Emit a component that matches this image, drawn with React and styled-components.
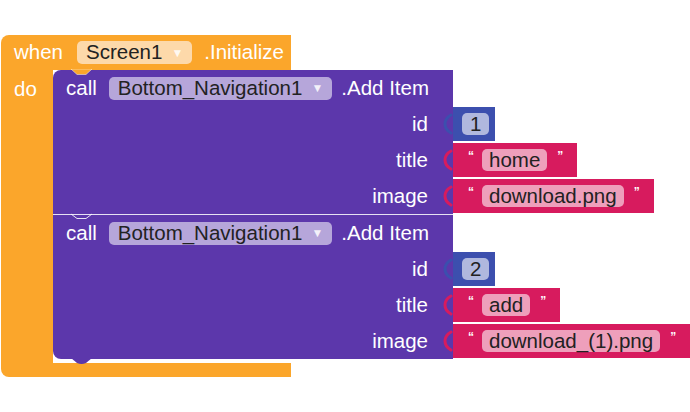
import React from 'react';
import styled, { createGlobalStyle } from 'styled-components';

const ORANGE = '#fba62b';
const ORANGE_FIELD = '#fdd9aa';
const PURPLE = '#5c37ab';
const PURPLE_FIELD = '#b6a6da';
const BLUE = '#3c4fae';
const BLUE_FIELD = '#b0b8de';
const RED = '#d71b5e';
const RED_FIELD = '#ee9fbb';

const GlobalStyle = createGlobalStyle`
  body {
    margin: 0;
    background: #fff;
    font-family: "Liberation Sans", Arial, sans-serif;
  }
`;

const Workspace = styled.div`
  padding: 35px 0 0 1px;
  font-size: 20.5px;
  line-height: 1;
`;

const EventBlock = styled.div`
  display: flex;
  flex-direction: column;
  align-items: flex-start;
`;

const EventHeader = styled.div`
  display: flex;
  align-items: center;
  width: 290px;
  height: 35px;
  box-sizing: border-box;
  padding-left: 13px;
  background: ${ORANGE};
  border-radius: 8px 0 0 0;
  color: #fff;
`;

const Word = styled.span`
  color: #fff;
  margin-right: ${p => p.$gap || 0}px;
  white-space: nowrap;
`;

const Dropdown = styled.span`
  display: inline-flex;
  align-items: center;
  height: 23px;
  box-sizing: border-box;
  padding: 0 9px;
  border-radius: 5px;
  background: ${p => p.$bg};
  color: #222;
  margin-right: ${p => p.$gap || 0}px;
  white-space: nowrap;
`;

const Arrow = styled.span`
  font-size: 12px;
  color: rgba(255, 255, 255, 0.85);
  margin-left: 9px;
`;

const EventBody = styled.div`
  display: flex;
`;

const DoArm = styled.div`
  width: 52px;
  flex-shrink: 0;
  background: ${ORANGE};
  color: #fff;
  box-sizing: border-box;
  padding: 9px 0 0 13px;
`;

const Statements = styled.div`
  display: flex;
  flex-direction: column;
  padding-bottom: 4px;
`;

const EventFooter = styled.div`
  width: 290px;
  height: 14px;
  background: ${ORANGE};
  border-radius: 0 0 0 8px;
`;

const CallBlock = styled.div`
  position: relative;
  width: 400px;
  background: ${PURPLE};
  border-radius: ${p => (p.$first ? '8px 0 0 0' : '0 0 0 8px')};
  border-top: ${p => (p.$first ? 'none' : '1px solid rgba(255,255,255,0.85)')};
`;

const CallHeader = styled.div`
  display: flex;
  align-items: center;
  height: 36px;
  padding-left: 13px;
`;

const InputRow = styled.div`
  display: flex;
  align-items: center;
  height: 36px;
`;

const InputLabel = styled.div`
  width: 400px;
  flex-shrink: 0;
  box-sizing: border-box;
  padding-right: 25px;
  text-align: right;
  color: #fff;
`;

const ValueBlock = styled.div`
  position: relative;
  display: flex;
  align-items: center;
  height: 34px;
  box-sizing: border-box;
  padding: ${p => p.$pad};
  background: ${p => p.$bg};
`;

const Field = styled.span`
  display: inline-flex;
  align-items: center;
  height: 22px;
  box-sizing: border-box;
  padding: 0 ${p => p.$pad || 7}px;
  border-radius: 5px;
  background: ${p => p.$bg};
  color: #222;
  white-space: nowrap;
`;

const Quote = styled.span`
  align-self: flex-start;
  margin-top: 7px;
  font-size: 12px;
  font-weight: bold;
  color: #fff;
`;

const Tab = styled.svg`
  position: absolute;
  left: -11px;
  top: 6px;
`;

const Notch = styled.svg`
  position: absolute;
  left: 18px;
  top: ${p => p.$top}px;
`;

// the output tab of a value block, seen as a "(" sitting in the parent's socket
const OutputTab = ({ color }) => (
  <Tab width="12" height="22" viewBox="0 0 12 22">
    <path
      d="M9,2 C4.5,4.5 3,7.5 3,11 C3,14.5 4.5,17.5 9,20"
      fill="none"
      stroke={color}
      strokeWidth="3"
      strokeLinecap="round"
    />
  </Tab>
);

const NumberBlock = ({ value }) => (
  <ValueBlock $bg={BLUE} $pad="0 6px 0 9px">
    <OutputTab color={BLUE} />
    <Field $bg={BLUE_FIELD} $pad={8}>{value}</Field>
  </ValueBlock>
);

const TextBlock = ({ value }) => (
  <ValueBlock $bg={RED} $pad="0 14px 0 15px">
    <OutputTab color={RED} />
    <Quote>“</Quote>
    <Field $bg={RED_FIELD} style={{ margin: '0 10px 0 8px' }}>{value}</Field>
    <Quote>”</Quote>
  </ValueBlock>
);

const AddItemCall = ({ first, id, title, image }) => (
  <CallBlock $first={first}>
    {first ? (
      <Notch $top={-1} width="22" height="7" viewBox="0 0 22 7">
        <path d="M0,0 L6,5.5 H15 L21,0 Z" fill={ORANGE} stroke="rgba(255,255,255,0.6)" strokeWidth="0.8" />
      </Notch>
    ) : (
      <Notch $top={-2} width="22" height="7" viewBox="0 0 22 7">
        <path d="M0,1 L6,5.5 H15 L21,1" fill="none" stroke="rgba(255,255,255,0.85)" strokeWidth="1" />
      </Notch>
    )}
    {!first && (
      <Notch $top={143} width="22" height="7" viewBox="0 0 22 7">
        <path d="M0,0 L6,5 Q10.5,7 15,5 L21,0 Z" fill={PURPLE} />
      </Notch>
    )}
    <CallHeader>
      <Word $gap={12}>call</Word>
      <Dropdown $bg={PURPLE_FIELD} $gap={9}>
        Bottom_Navigation1<Arrow>▼</Arrow>
      </Dropdown>
      <Word>.Add Item</Word>
    </CallHeader>
    <InputRow>
      <InputLabel>id</InputLabel>
      <NumberBlock value={id} />
    </InputRow>
    <InputRow>
      <InputLabel>title</InputLabel>
      <TextBlock value={title} />
    </InputRow>
    <InputRow>
      <InputLabel>image</InputLabel>
      <TextBlock value={image} />
    </InputRow>
  </CallBlock>
);

export default function App() {
  return (
    <>
      <GlobalStyle />
      <Workspace>
        <EventBlock>
          <EventHeader>
            <Word $gap={14}>when</Word>
            <Dropdown $bg={ORANGE_FIELD} $gap={12}>
              Screen1<Arrow>▼</Arrow>
            </Dropdown>
            <Word>.Initialize</Word>
          </EventHeader>
          <EventBody>
            <DoArm>do</DoArm>
            <Statements>
              <AddItemCall first id="1" title="home" image="download.png" />
              <AddItemCall id="2" title="add" image="download_(1).png" />
            </Statements>
          </EventBody>
          <EventFooter />
        </EventBlock>
      </Workspace>
    </>
  );
}
